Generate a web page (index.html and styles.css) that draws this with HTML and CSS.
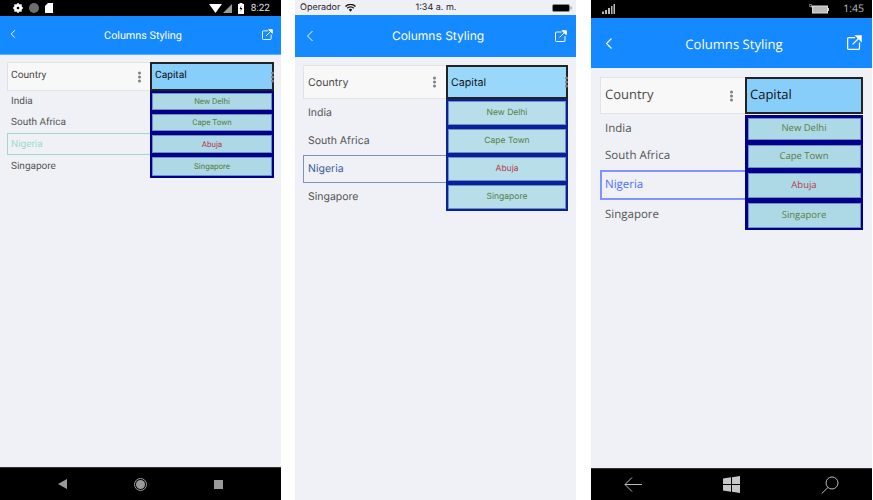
FILE: index.html
```html
<!DOCTYPE html>
<html lang="en">
<head>
<meta charset="utf-8">
<title>Columns Styling</title>
<link rel="stylesheet" href="styles.css">
</head>
<body>
<div class="screens">

<section class="phone android">
  <div class="status">
    <div class="status-group">
      <svg class="ic" width="10" height="10" viewBox="0 0 10 10"><circle cx="5" cy="5" r="3" fill="none" stroke="#fff" stroke-width="2.2"/><path d="M5 0v10M0 5h10M1.5 1.5l7 7M8.5 1.5l-7 7" stroke="#fff" stroke-width="1.4"/><circle cx="5" cy="5" r="1.3" fill="#000"/></svg>
      <svg class="ic" width="10" height="10" viewBox="0 0 10 10"><circle cx="5" cy="5" r="5" fill="#6e6e6e"/></svg>
      <svg class="ic" width="8" height="10" viewBox="0 0 8 10"><path d="M3 0h5v10H0V3z" fill="#fff"/></svg>
    </div>
    <div class="status-group right">
      <svg class="ic" width="13" height="9" viewBox="0 0 13 9"><path d="M0 0h13L6.5 9z" fill="#fff"/></svg>
      <svg class="ic sig" width="9" height="9" viewBox="0 0 9 9"><path d="M9 0v9H0z" fill="#9a9a9a"/></svg>
      <svg class="ic" width="6" height="11" viewBox="0 0 6 11"><path d="M1.5 0h3v1H6v10H0V1h1.5z" fill="#fff"/><path d="M3.4 2.5L1.6 6h1.3l-.4 2.6L4.4 5H3z" fill="#000"/></svg>
      <span class="clock">8:22</span>
    </div>
  </div>
  <header class="bar">
    <svg class="back" viewBox="0 0 8 12"><path d="M6.5 1L1.5 6l5 5" fill="none" stroke="#fff" stroke-width="1.2"/></svg>
    <h1 class="title">Columns Styling</h1>
    <svg class="share" viewBox="0 0 12 12"><path d="M6.5 2H1.500a1 1 0 0 0-1 1v7.500a1 1 0 0 0 1 1H9a1 1 0 0 0 1-1V6" fill="none" stroke="#fff" stroke-width="1"/><path d="M4.500 7.500L10 2M7.200 .7h4.100v4.100z" fill="#fff" stroke="#fff" stroke-width="1"/></svg>
  </header>
  <main class="content">
    <div class="grid">
      <div class="head country">Country<span class="dots"></span></div>
      <div class="head capital">Capital<span class="dots cut"></span></div>
      <div class="name">India</div><div class="cap"><span class="inner green">New Delhi</span></div>
      <div class="name">South Africa</div><div class="cap"><span class="inner green">Cape Town</span></div>
      <div class="name sel">Nigeria</div><div class="cap"><span class="inner red">Abuja</span></div>
      <div class="name">Singapore</div><div class="cap"><span class="inner green">Singapore</span></div>
    </div>
  </main>
  <footer class="nav">
    <svg width="9" height="10" viewBox="0 0 9 10"><path d="M9 0v10L0 5z" fill="#9a9a9a"/></svg>
    <svg width="13" height="13" viewBox="0 0 13 13"><circle cx="6.500" cy="6.500" r="6" fill="none" stroke="#9a9a9a"/><circle cx="6.500" cy="6.500" r="4.500" fill="#9a9a9a"/></svg>
    <svg width="9" height="9" viewBox="0 0 9 9"><rect width="9" height="9" fill="#9a9a9a"/></svg>
  </footer>
</section>

<section class="phone ios">
  <div class="status">
    <div class="status-group side">
      <span class="carrier">Operador</span>
      <svg class="ic" width="11" height="8" viewBox="0 0 11 8"><path d="M.5 2.500a7 7 0 0 1 10 0M2.200 4.300a4.600 4.600 0 0 1 6.600 0" fill="none" stroke="#111" stroke-width="1.300"/><path d="M3.800 5.700a2.300 2.300 0 0 1 3.400 0L5.500 7.700z" fill="#111"/></svg>
    </div>
    <span class="clock">1:34 a. m.</span>
    <div class="status-group side end">
      <svg class="ic" width="20" height="8" viewBox="0 0 20 8"><rect x=".5" y=".5" width="17" height="7" rx="1.500" fill="#000" stroke="#888"/><rect x="18.500" y="2.500" width="1" height="3" fill="#888"/></svg>
    </div>
  </div>
  <header class="bar">
    <svg class="back" viewBox="0 0 8 12"><path d="M6.500 1L1.500 6l5 5" fill="none" stroke="#fff" stroke-width="1"/></svg>
    <h1 class="title">Columns Styling</h1>
    <svg class="share" viewBox="0 0 12 12"><path d="M6.500 2H1.500a1 1 0 0 0-1 1v7.500a1 1 0 0 0 1 1H9a1 1 0 0 0 1-1V6" fill="none" stroke="#fff" stroke-width="1"/><path d="M4.500 7.500L10 2M7.200 .7h4.100v4.100z" fill="#fff" stroke="#fff" stroke-width="1"/></svg>
  </header>
  <main class="content">
    <div class="grid">
      <div class="head country">Country<span class="dots"></span></div>
      <div class="head capital">Capital<span class="dots cut"></span></div>
      <div class="name">India</div><div class="cap"><span class="inner green">New Delhi</span></div>
      <div class="name">South Africa</div><div class="cap"><span class="inner green">Cape Town</span></div>
      <div class="name sel">Nigeria</div><div class="cap"><span class="inner red">Abuja</span></div>
      <div class="name">Singapore</div><div class="cap"><span class="inner green">Singapore</span></div>
    </div>
  </main>
</section>

<section class="phone win">
  <div class="status">
    <svg class="ic" width="13" height="10" viewBox="0 0 13 10"><path d="M0 7.500h2V10H0zM3 6h2v4H3zM6 4h2v6H6zM9 2h1.500v8H9zM11.500 0H13v10h-1.500z" fill="#bbb"/></svg>
    <div class="status-group right">
      <svg class="ic" width="20" height="10" viewBox="0 0 20 10"><circle cx="1.500" cy="1.500" r="1.200" fill="none" stroke="#ccc" stroke-width=".8"/><path d="M2 2.500l2 1" stroke="#ccc"/><rect x="3.500" y="2" width="15" height="7" fill="#bbb" stroke="#ddd"/><rect x="19" y="4" width="1" height="3" fill="#ccc"/></svg>
      <span class="clock">1:45</span>
    </div>
  </div>
  <header class="bar">
    <svg class="back" viewBox="0 0 8 12"><path d="M6.500 1L1.500 6l5 5" fill="none" stroke="#fff" stroke-width="1.100"/></svg>
    <h1 class="title">Columns Styling</h1>
    <svg class="share" viewBox="0 0 12 12"><path d="M6.500 2H1.500a1 1 0 0 0-1 1v7.500a1 1 0 0 0 1 1H9a1 1 0 0 0 1-1V6" fill="none" stroke="#fff" stroke-width="1"/><path d="M4.500 7.500L10 2M7.200 .7h4.100v4.100z" fill="#fff" stroke="#fff" stroke-width="1"/></svg>
  </header>
  <main class="content">
    <div class="grid">
      <div class="head country">Country<span class="dots"></span></div>
      <div class="head capital">Capital</div>
      <div class="name">India</div><div class="cap"><span class="inner green">New Delhi</span></div>
      <div class="name">South Africa</div><div class="cap"><span class="inner green">Cape Town</span></div>
      <div class="name sel">Nigeria</div><div class="cap"><span class="inner red">Abuja</span></div>
      <div class="name">Singapore</div><div class="cap"><span class="inner green">Singapore</span></div>
    </div>
  </main>
  <footer class="nav">
    <svg width="18" height="15" viewBox="0 0 18 15"><path d="M18 7.500H1M8 .5L1 7.500l7 7" fill="none" stroke="#bbb" stroke-width="1"/></svg>
    <svg width="17" height="17" viewBox="0 0 17 17"><path d="M0 2.500L8 1.300V8H0zM9 1.200L17 0v8H9zM0 9h8v6.700L0 14.500zM9 9h8v8l-8-1.200z" fill="#c8c8c8"/></svg>
    <svg width="18" height="18" viewBox="0 0 18 18"><circle cx="11" cy="7" r="6" fill="none" stroke="#bbb" stroke-width="1"/><path d="M7 11.500L.7 17.500" stroke="#bbb" stroke-width="1"/></svg>
  </footer>
</section>

</div>
</body>
</html>
```
FILE: styles.css
```css
* { box-sizing: border-box; }
html, body { margin: 0; height: 100%; background: #fff; overflow: hidden; }
body { text-rendering: geometricPrecision; }
.screens { display: flex; height: 500px; gap: 14px; }
.phone { width: 281px; height: 500px; display: flex; flex-direction: column; background: #eff1f6; flex: none; }
.win { margin-left: 1px; }
.status { display: flex; align-items: center; justify-content: space-between; flex: none; }
.status-group { display: flex; align-items: center; }
.ic { display: block; flex: none; }
.bar { display: flex; align-items: center; background: #1589ff; flex: none; color: #fff; }
.title { flex: 1; margin: 0; text-align: center; font-weight: 400; white-space: nowrap; }
.back, .share { display: block; flex: none; }
.content { flex: 1; min-height: 0; }
.grid { display: grid; }
.head { position: relative; display: flex; align-items: center; }
.country { background: #f8f8f8; border: 1px solid #e2e3e6; border-right: 0; color: #4a4a4a; }
.capital { background: #87cefa; border: 2px solid #222; color: #111; }
.dots { position: absolute; top: 50%; width: 3px; height: 3px; border-radius: 50%; background: #808080; box-shadow: 0 -4px 0 #808080, 0 4px 0 #808080; transform: translateY(-50%); }
.name { display: flex; align-items: center; color: #555; }
.cap { background: #00008b; display: flex; }
.inner { flex: 1; display: flex; align-items: center; justify-content: center; background: #add8e6; border: 1px solid #6f8fc0; }
.green { color: #55803f; }
.red { color: #b83a4a; }
.nav { flex: none; display: flex; align-items: center; background: #000; }

/* Android */
.android { font-family: Roboto, sans-serif; }
.android .status { height: 16px; background: #000; padding: 0 11px 0 13px; }
.android .status-group { gap: 6px; }
.android .status-group.right { gap: 4px; }
.android .sig { margin-right: 2px; margin-left: -3px; }
.android .clock { color: #ddd; font-size: 10px; margin-left: 3px; }
.android .bar { height: 39px; padding: 0 8px 0 10px; border-bottom: 1px solid #5ab0ff; }
.android .back { width: 6px; height: 10px; margin-top: -2px; }
.android .title { font-size: 10.800px; padding-left: 8px; }
.android .share { width: 11px; height: 11px; margin-top: -2px; }
.android .content { padding: 7px 7px 0; }
.android .grid { grid-template-columns: 143px 124px; grid-template-rows: 29px 21px 21px 22px 23px; }
.android .head { font-size: 10.200px; padding: 0 0 2px 3px; }
.android .capital { padding-left: 3px; }
.android .name { font-size: 10px; padding-left: 4px; }
.android .dots { right: 9px; }
.android .dots.cut { right: -2px; }
.android .cap { padding: 2px 2px; font-size: 8px; }
.android .sel { color: #9ddcd2; border: 1px solid #a3d8d0; border-right: 0; padding-left: 3px; }
.android .nav { height: 33px; padding: 0 58px; justify-content: space-between; border-top: 1px solid #333; }

/* iOS */
.ios { font-family: Inter, "Open Sans", sans-serif; }
.ios .status { height: 15px; padding: 0 4px 0 5px; background: #eff0f5; }
.ios .status-group { gap: 5px; }
.ios .side { width: 110px; }
.ios .end { justify-content: flex-end; }
.ios .carrier, .ios .clock { color: #222; font-size: 9px; }
.ios .bar { height: 42px; padding: 0 9px 0 11px; }
.ios .back { width: 8px; height: 12px; }
.ios .title { font-size: 12px; padding: 0 0 1px 7px; }
.ios .share { width: 12px; height: 12px; margin-top: -1px; }
.ios .content { padding: 7.500px 8px 0; }
.ios .grid { grid-template-columns: 143px 122px; grid-template-rows: 34px 28px 28px 28px 28px; }
.ios .head { font-size: 10.700px; padding: 1px 0 0 4px; }
.ios .capital { padding-left: 3px; background: #9ad8fb; }
.ios .name { font-size: 10.500px; padding: 0 0 0 5px; }
.ios .dots { right: 10px; }
.ios .dots.cut { right: -2px; }
.ios .cap { padding: 2px; font-size: 8.500px; background: #08209a; }
.ios .inner { background: #b8deea; }
.ios .sel { color: #3f5c9a; border: 1px solid #7d93bc; border-right: 0; padding: 0 0 0 4px; }

/* Windows */
.win { font-family: "Open Sans", sans-serif; }
.win .status { height: 18px; background: #000; padding: 0 8px 0 11px; }
.win .status-group { gap: 14px; }
.win .clock { color: #bbb; font-size: 10.500px; }
.win .bar { height: 50px; padding: 0 10px 0 14px; }
.win .back { width: 8px; height: 13px; }
.win .title { font-size: 13.100px; padding: 1px 0 0 8px; }
.win .share { width: 15px; height: 15px; margin-top: -1px; }
.win .content { padding: 9px 9px 0; }
.win .grid { grid-template-columns: 145px 118px; grid-template-rows: 38px 27px 28px 30px 30px; }
.win .head { font-size: 13px; padding: 0 0 3px 4px; margin-bottom: 1px; }
.win .capital { padding-left: 3px; }
.win .name { font-size: 11.500px; padding: 0 0 1px 5px; }
.win .dots { right: 12px; }
.win .cap { padding: 2.500px; font-size: 9.500px; }
.win .inner { padding-bottom: 2px; }
.win .sel { color: #4d6fff; border: 2px solid #7f94ff; border-right: 0; padding-left: 3px; }
.win .nav { height: 32px; padding: 0 33px; justify-content: space-between; border-top: 1px solid #333; }
```
